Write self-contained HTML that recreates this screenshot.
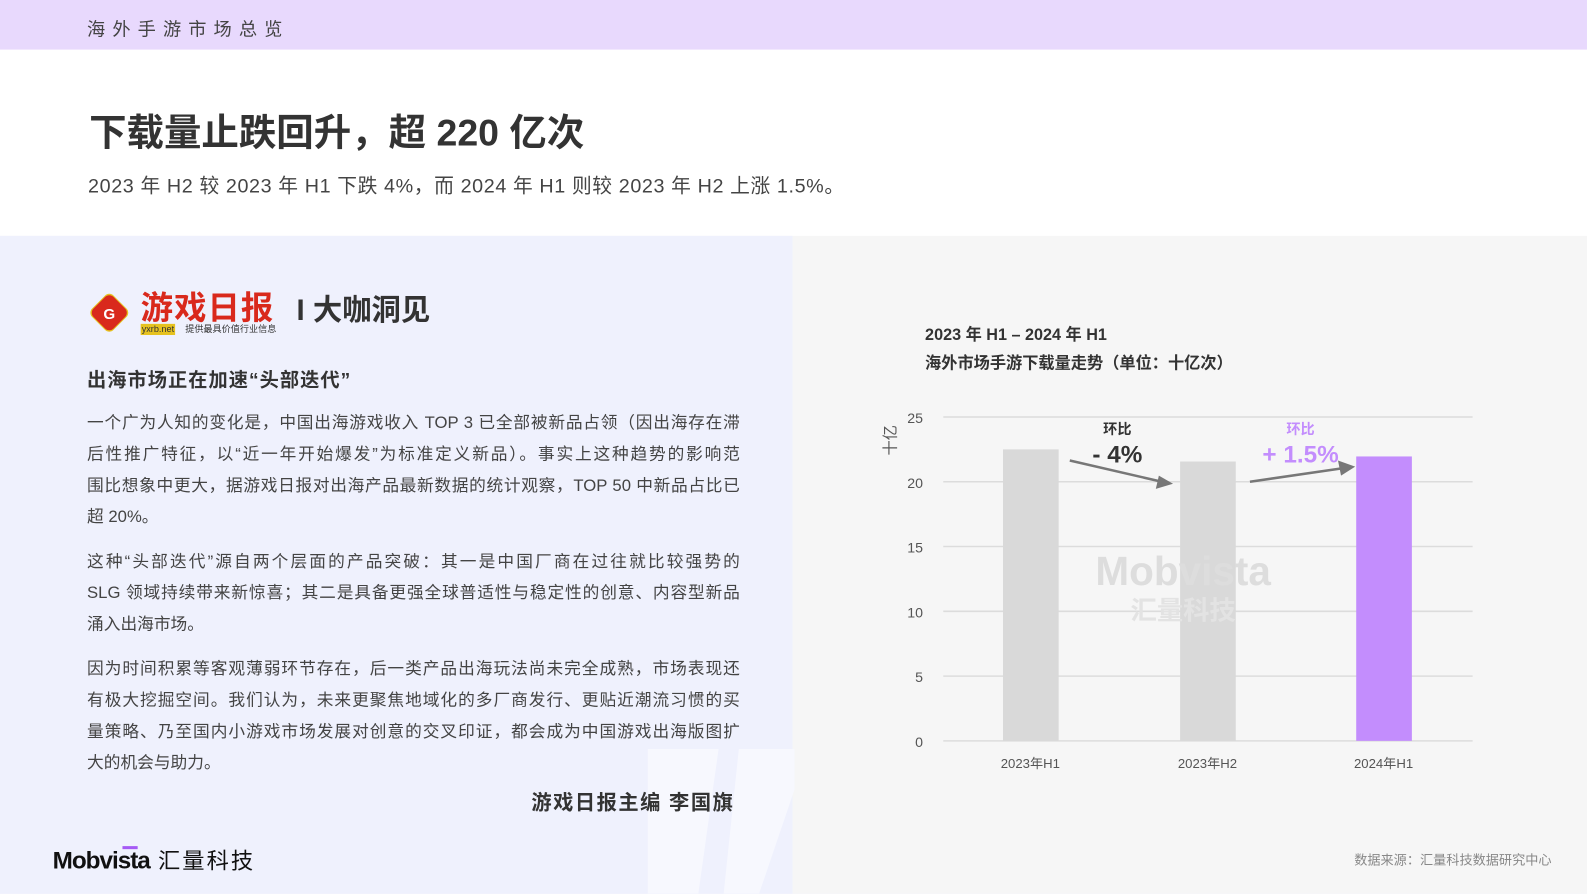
<!DOCTYPE html>
<html><head><meta charset="utf-8"><style>
*{margin:0;padding:0;box-sizing:border-box}
body{width:1587px;height:893px;position:relative;overflow:hidden;background:#eff1fd;font-family:"Liberation Sans","Noto Sans CJK SC",sans-serif;color:#333}
#w{position:absolute;left:0;top:0;width:1568px;height:883px;transform:scale(1.0121);transform-origin:0 0;background:#fff}
.a{position:absolute;white-space:nowrap}
.p{position:absolute;left:86px;width:645px;font-size:16.5px;line-height:31px;color:#444}
.p div{text-align:justify;text-align-last:justify;white-space:nowrap;height:31px}
.p div.l{text-align-last:left}
</style></head><body><div id="w">
<div class="a" style="left:0;top:0;width:1568px;height:49px;background:#e8d9fd"></div>
<div class="a" style="left:86px;top:15px;font-size:18px;letter-spacing:7px;color:#444">海外手游市场总览</div>
<div class="a" style="left:88px;top:101px;font-size:37px;font-weight:bold;color:#333">下载量止跌回升，超 220 亿次</div>
<div class="a" style="left:87px;top:167px;font-size:19.5px;color:#444;letter-spacing:0.6px">2023 年 H2 较 2023 年 H1 下跌 4%，而 2024 年 H1 则较 2023 年 H2 上涨 1.5%。</div>
<div class="a" style="left:0;top:233px;width:783px;height:650px;background:#eff1fd"></div>
<div class="a" style="left:783px;top:233px;width:785px;height:650px;background:#f6f6f6"></div>
<svg class="a" style="left:620px;top:740px" width="165" height="143"><polygon points="20,0 90,0 70,143 20,143" fill="#f7f8fe"/><polygon points="110,0 165,0 165,40 130,143 95,143" fill="#f7f8fe"/></svg>
<svg class="a" style="left:84px;top:285px" width="48" height="48"><rect x="9" y="9" width="30" height="30" rx="6" transform="rotate(45 24 24)" fill="#e6c21f"/><rect x="10" y="10" width="28" height="28" rx="6" transform="rotate(45 24 24)" fill="#d9291c"/><text x="24" y="30" font-size="15" font-weight="bold" fill="#fff" text-anchor="middle" font-family="Liberation Sans">G</text></svg>
<div class="a" style="left:139px;top:279px;font-size:32px;font-weight:bold;color:#d9291c;letter-spacing:1px">游戏日报</div>
<div class="a" style="left:139px;top:320px;font-size:9px;background:#e6c21f;color:#333;padding:0 1px;line-height:11px">yxrb.net</div>
<div class="a" style="left:183px;top:320px;font-size:9px;color:#333;line-height:11px">提供最具价值行业信息</div>
<div class="a" style="left:293px;top:283px;font-size:29px;font-weight:bold;color:#333">I 大咖洞见</div>
<div class="a" style="left:86px;top:361px;font-size:19px;font-weight:bold;color:#333;letter-spacing:1px">出海市场正在加速“头部迭代”</div>
<div class="p" style="top:403px">
<div>一个广为人知的变化是，中国出海游戏收入 TOP 3 已全部被新品占领（因出海存在滞</div>
<div>后性推广特征，以“近一年开始爆发”为标准定义新品）。事实上这种趋势的影响范</div>
<div>围比想象中更大，据游戏日报对出海产品最新数据的统计观察，TOP 50 中新品占比已</div>
<div class="l">超 20%。</div></div>
<div class="p" style="top:540px">
<div>这种“头部迭代”源自两个层面的产品突破：其一是中国厂商在过往就比较强势的</div>
<div>SLG 领域持续带来新惊喜；其二是具备更强全球普适性与稳定性的创意、内容型新品</div>
<div class="l">涌入出海市场。</div></div>
<div class="p" style="top:646px">
<div>因为时间积累等客观薄弱环节存在，后一类产品出海玩法尚未完全成熟，市场表现还</div>
<div>有极大挖掘空间。我们认为，未来更聚焦地域化的多厂商发行、更贴近潮流习惯的买</div>
<div>量策略、乃至国内小游戏市场发展对创意的交叉印证，都会成为中国游戏出海版图扩</div>
<div class="l">大的机会与助力。</div></div>
<div class="a" style="left:525px;top:777px;font-size:20px;font-weight:bold;color:#333;letter-spacing:1.5px">游戏日报主编 李国旗</div>
<div class="a" style="left:52px;top:833px;font-size:24px;font-weight:bold;color:#111;letter-spacing:-1px">Mobvista<span style="font-weight:normal;letter-spacing:2px;font-size:22px"> 汇量科技</span></div>
<div class="a" style="left:121px;top:836px;width:15px;height:3px;background:#a55af5"></div>
<div class="a" style="left:914px;top:318px;font-size:16px;font-weight:bold;color:#333;line-height:28px">2023 年 H1 – 2024 年 H1<br>海外市场手游下载量走势（单位：十亿次）</div>
<svg class="a" style="left:860px;top:400px" width="620" height="380" font-family="Liberation Sans" font-size="14">
<g stroke="#dcdcdc" stroke-width="1.5"><line x1="72" y1="12" x2="595" y2="12"/><line x1="72" y1="76" x2="595" y2="76"/><line x1="72" y1="140" x2="595" y2="140"/><line x1="72" y1="204" x2="595" y2="204"/><line x1="72" y1="268" x2="595" y2="268"/><line x1="72" y1="332" x2="595" y2="332"/></g>
<g fill="#555" text-anchor="end"><text x="52" y="18">25</text><text x="52" y="82">20</text><text x="52" y="146">15</text><text x="52" y="210">10</text><text x="52" y="274">5</text><text x="52" y="338">0</text></g>
<text x="0" y="0" fill="#555" font-size="15" transform="translate(25 50) rotate(-90)" font-family="Noto Sans CJK SC">十亿</text>
<rect x="131" y="44" width="55" height="288" fill="#d9d9d9"/>
<rect x="306" y="56" width="55" height="276" fill="#d9d9d9"/>
<rect x="480" y="51" width="55" height="281" fill="#c38dfd"/>
<text x="309" y="178" font-size="40" font-weight="bold" fill="#ddd" text-anchor="middle">Mobvista</text>
<text x="309" y="212" font-size="26" font-weight="bold" fill="#e3e3e3" text-anchor="middle" font-family="Noto Sans CJK SC">汇量科技</text>
<g fill="#555" text-anchor="middle" font-size="13"><text x="158" y="359">2023年H1</text><text x="333" y="359">2023年H2</text><text x="507" y="359">2024年H1</text></g>
<text x="244" y="29" font-size="14" font-weight="bold" fill="#333" text-anchor="middle" font-family="Noto Sans CJK SC">环比</text>
<text x="244" y="57" font-size="24" font-weight="bold" fill="#333" text-anchor="middle">- 4%</text>
<text x="425" y="29" font-size="14" font-weight="bold" fill="#c38dfd" text-anchor="middle" font-family="Noto Sans CJK SC">环比</text>
<text x="425" y="57" font-size="24" font-weight="bold" fill="#c38dfd" text-anchor="middle">+ 1.5%</text>
<g stroke="#777" stroke-width="2.5" fill="#777"><line x1="197" y1="55" x2="288" y2="76"/><polygon points="299,78 285,70 282,83" stroke="none"/><line x1="375" y1="76" x2="464" y2="63"/><polygon points="479,61 462,55 465,70" stroke="none"/></g>
</svg>
<div class="a" style="left:1338px;top:839px;font-size:13px;color:#888">数据来源：汇量科技数据研究中心</div>
</div></body></html>
